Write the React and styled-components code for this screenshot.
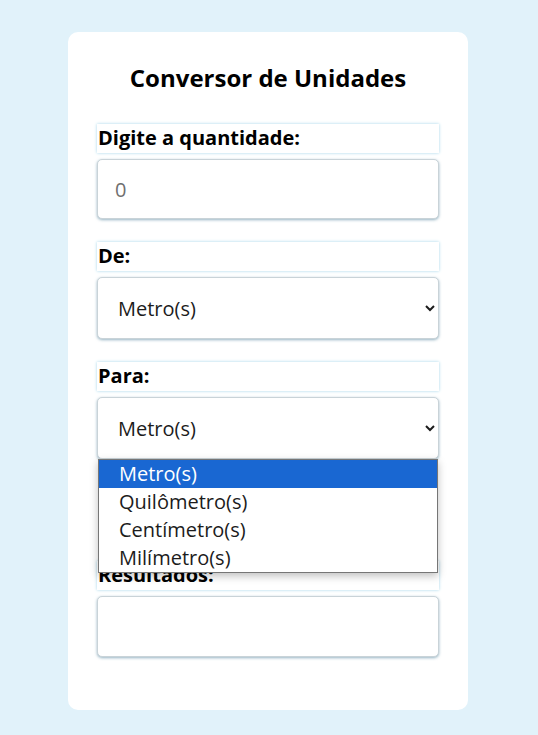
import React, { useState } from "react";
import styled, { createGlobalStyle } from "styled-components";

const GlobalStyle = createGlobalStyle`
  body {
    margin: 0;
    background-color: #e1f2fa;
    font-family: "Open Sans", "DejaVu Sans", sans-serif;
  }
`;

const Page = styled.div`
  padding: 32px 0 25px 68px;
`;

const Card = styled.div`
  width: 400px;
  box-sizing: border-box;
  padding: 30px 29px 53px;
  background-color: white;
  border-radius: 10px;
  display: flex;
  flex-direction: column;
`;

const Title = styled.h1`
  margin: 0 0 30px;
  font-size: 24px;
  line-height: 32px;
  text-align: center;
  color: black;
`;

const Field = styled.div`
  display: flex;
  flex-direction: column;
  gap: 6px;
  margin-bottom: ${(props) => props.$spacing ?? 23}px;
  position: relative;
`;

const Label = styled.label`
  display: block;
  height: 29px;
  line-height: 28px;
  padding: 0 1px;
  font-size: 20px;
  font-weight: 700;
  color: black;
  box-shadow: 0 0 3px #a3d6ea;
`;

const controlStyles = `
  box-sizing: border-box;
  width: 100%;
  border: 1px solid #c9d3d8;
  border-radius: 5px;
  box-shadow: 0 1px 3px rgba(80, 130, 155, 0.6);
  background-color: white;
  font-family: "Open Sans", sans-serif;
  font-size: 20px;
  outline: none;
`;

const Input = styled.input`
  ${controlStyles}
  height: 60px;
  padding: 0 17px;
  color: #333;

  &::placeholder {
    color: #6f6f6f;
  }
`;

const Select = styled.select`
  ${controlStyles}
  height: 62px;
  padding: 0 10px 0 16px;
  color: #1c1c1c;
`;

const Result = styled.div`
  ${controlStyles}
  height: 61px;
`;

const OptionList = styled.ul`
  position: absolute;
  top: 100%;
  left: 1px;
  right: 1px;
  margin: 0;
  padding: 0;
  list-style: none;
  background-color: white;
  border: 1px solid #767676;
  box-shadow: 0 3px 8px rgba(0, 0, 0, 0.25);
  z-index: 2;
`;

const OptionItem = styled.li`
  height: 28px;
  line-height: 28px;
  padding-left: 20px;
  font-size: 20px;
  color: ${(props) => (props.$active ? "white" : "#1c1c1c")};
  background-color: ${(props) => (props.$active ? "#1967d2" : "white")};
`;

const units = ["Metro(s)", "Quilômetro(s)", "Centímetro(s)", "Milímetro(s)"];

const App = () => {
  const [from, setFrom] = useState(units[0]);
  const [to, setTo] = useState(units[0]);

  return (
    <>
      <GlobalStyle />
      <Page>
        <Card>
          <Title>Conversor de Unidades</Title>
          <Field>
            <Label htmlFor="quantidade">Digite a quantidade:</Label>
            <Input id="quantidade" type="text" placeholder="0" />
          </Field>
          <Field>
            <Label htmlFor="de">De:</Label>
            <Select id="de" value={from} onChange={(e) => setFrom(e.target.value)}>
              {units.map((unit) => (
                <option key={unit}>{unit}</option>
              ))}
            </Select>
          </Field>
          <Field $spacing={102}>
            <Label htmlFor="para">Para:</Label>
            <Select id="para" value={to} onChange={(e) => setTo(e.target.value)}>
              {units.map((unit) => (
                <option key={unit}>{unit}</option>
              ))}
            </Select>
            <OptionList>
              {units.map((unit) => (
                <OptionItem key={unit} $active={unit === to}>
                  {unit}
                </OptionItem>
              ))}
            </OptionList>
          </Field>
          <Field $spacing={0}>
            <Label>Resultados:</Label>
            <Result />
          </Field>
        </Card>
      </Page>
    </>
  );
};

export default App;
